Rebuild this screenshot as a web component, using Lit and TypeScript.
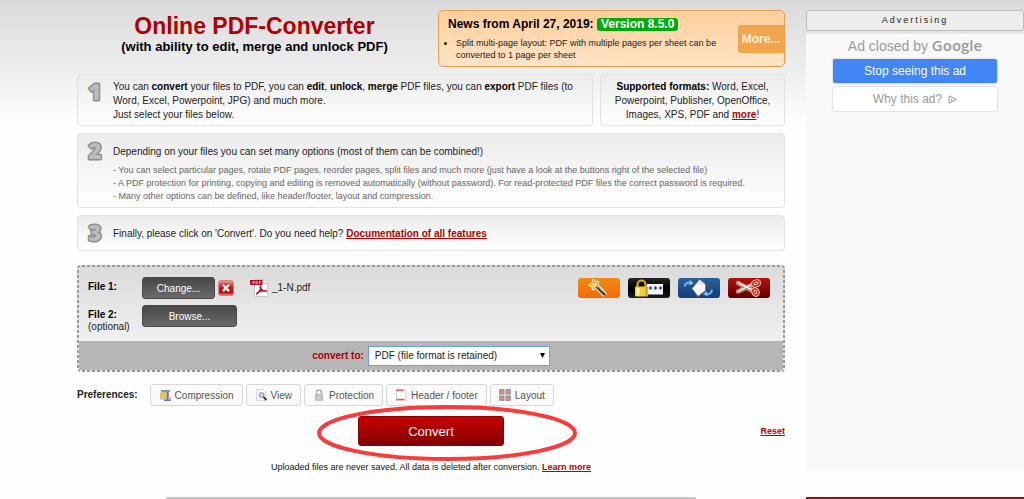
import { LitElement, html, css, svg } from "lit";
import { customElement } from "lit/decorators.js";

const icons = {
  close: html`<svg width="16" height="16" viewBox="0 0 16 16">
    <defs><linearGradient id="g" x1="0" y1="0" x2="0" y2="1"><stop offset="0" stop-color="#f5a09a" /><stop offset=".45" stop-color="#c81e1e" /><stop offset=".8" stop-color="#c00f0f" /><stop offset="1" stop-color="#e88" /></linearGradient></defs>
    <rect x=".5" y=".5" width="15" height="15" rx="2.5" fill="url(#g)" stroke="#d98080" />
    <path d="M5 4.7l6 6.4M11 4.7l-6 6.4" stroke="#8c2020" stroke-width="4" />
    <path d="M5 4.7l6 6.4M11 4.7l-6 6.4" stroke="#f2f2f2" stroke-width="2.4" />
  </svg>`,
  pdf: html`<svg width="18" height="18" viewBox="0 0 18 18">
    <path d="M4.500 .5h9l4 4v13h-13z" fill="#fff" stroke="#c9c9c9" />
    <path d="M13.500 .5v4h4" fill="#eee" stroke="#c9c9c9" />
    <path d="M10.500 7c1 2-.5 5.500-4 8M10.500 7c-.8 1.500 1 5.500 6 5M7 14c3-2 6-2.500 9-2" fill="none" stroke="#b11226" stroke-width="1.500" stroke-linecap="round" />
    <rect y="1" width="12.500" height="5" fill="#b11226" />
    <path d="M3 5V2.500h1.300v1.300H3M6 2.500V5h.8l.6-.6V3l-.6-.5zM9.300 5V2.500h1.500M9.300 3.700h1.200" fill="none" stroke="#f3c4ca" stroke-width=".7" />
  </svg>`,
  wand: html`<svg width="42" height="20" viewBox="0 0 42 20">
    <path d="M15.500 2l1.600 2.700 3-.9-.5 3.200L27.500 15.500l-2 2L17.500 9.600l-2.600 1.900-.4-3.100-3-1.100 2.600-1.700z" fill="#fff" stroke="#fff" stroke-width="2" stroke-linejoin="round" />
    <path d="M18.500 8.500l7.800 7.800" stroke="#333" stroke-width="2.600" stroke-linecap="round" />
    <path d="M19 8.300l6 6" stroke="#999" stroke-width=".9" />
    <path d="M15.500 2.300l1.400 2.800 2.800-.9-.6 2.900 2 2-3-.3-2.600 2-.5-2.900-2.800-1.100 2.500-1.500z" fill="#fbe04a" stroke="#ee7d3e" stroke-width=".8" />
  </svg>`,
  lock: html`<svg width="42" height="20" viewBox="0 0 42 20">
    <rect x="19" y="6" width="16" height="10.500" fill="#f7f7fb" />
    <path d="M22.500 8v4M20.800 9l3.400 2M24.200 9l-3.400 2M27.500 8v4M25.800 9l3.400 2M29.200 9l-3.400 2M32.500 8v4M30.800 9l3.400 2M34.200 9l-3.400 2" stroke="#3b49a0" stroke-width=".9" />
    <path d="M9.500 9V6.500a4 4 0 018 0V9" fill="none" stroke="#d5ad20" stroke-width="2.200" />
    <rect x="7" y="8.500" width="13" height="10" rx="1" fill="#f0cd3c" />
    <path d="M8.500 10h3v7.500h-3z" fill="#fff3a8" />
    <path d="M17.500 9h2v9h-2z" fill="#cf9f14" />
  </svg>`,
  rotate: html`<svg width="42" height="20" viewBox="0 0 42 20">
    <path d="M7 8.500c-.5-3 3-5 6-3.500" fill="none" stroke="#69b4e8" stroke-width="2" />
    <path d="M12 1.800l3.500 4-4.800 1.500z" fill="#7fc4f2" />
    <path d="M33.500 11.500c1 3-2.500 5.500-5.500 4.500" fill="none" stroke="#69b4e8" stroke-width="2" />
    <path d="M29 13l-4 3 4.500 2.500z" fill="#7fc4f2" />
    <path d="M21.500 1.500l6 5v6l-7.500 6-6-8z" fill="#fafafa" stroke="#777" />
    <path d="M21.500 1.500l.5 4.500 5.500.5" fill="#ddd" />
  </svg>`,
  scissors: html`<svg width="42" height="20" viewBox="0 0 42 20">
    <g fill="none" stroke-linecap="round">
      <path d="M10 5l15 8M10 13.500l15-7" stroke="#eac7c4" stroke-width="4.500" opacity=".7" />
      <ellipse cx="28" cy="5.500" rx="3.500" ry="2.300" stroke="#f2d0cc" stroke-width="3.600" transform="rotate(-20 28 5.500)" />
      <ellipse cx="27.500" cy="14" rx="2.300" ry="3.200" stroke="#f2d0cc" stroke-width="3.600" transform="rotate(-25 27.500 14)" />
      <path d="M10 5l14 7M10 13.500l14-7" stroke="#888" stroke-width="2.400" />
      <path d="M10.500 5l13 6.500M10.500 13.200l13-6.500" stroke="#eee" stroke-width="1.400" />
      <ellipse cx="28" cy="5.500" rx="3.500" ry="2.300" stroke="#cf3932" stroke-width="1.800" transform="rotate(-20 28 5.500)" />
      <ellipse cx="27.500" cy="14" rx="2.300" ry="3.200" stroke="#cf3932" stroke-width="1.800" transform="rotate(-25 27.500 14)" />
    </g>
  </svg>`,
  compression: svg`<path d="M1.500 1h10l-1 2h-8z" fill="#8597ad"/><path d="M3 3h7v5H3z" fill="#93a3b8"/><path d="M1 3.500h7v4.500H1z" fill="#efc44e"/><path d="M1 8h11v2.500H1z" fill="#b8c2d0"/><path d="M8.500 3v8" stroke="#687c96" stroke-width="1.500"/><path d="M5 10.500h7V12H5z" fill="#5f7da6"/>`,
  view: svg`<path d="M1.500.5h7l2 2v9h-9z" fill="#fafafa" stroke="#d5d8de"/><circle cx="6.500" cy="6" r="2.500" fill="#b9d5f3" stroke="#7f9cc0"/><path d="M8.500 8l3 3.200" stroke="#222" stroke-width="1.800"/>`,
  protection: svg`<path d="M3.500 6V3.500a2.500 2.500 0 015 0V6" fill="none" stroke="#b5b5b5" stroke-width="1.600"/><rect x="2" y="5" width="8" height="7" rx="1" fill="#b4b4b4"/><path d="M3 7h6M3 9h6M3 11h6" stroke="#e4e4e4" stroke-width=".8"/>`,
  header: svg`<path d="M1.500.5h8l1.500 1.500v10h-9.500z" fill="#fff" stroke="#c9c9c9"/><path d="M1.500 1.500h7M1.500 10.500h8" stroke="#dc5f5f" stroke-width="1.500"/>`,
  layout: svg`<g fill="#d98c8c" stroke="#8b8b8b"><rect x=".7" y=".7" width="4.300" height="4.300"/><rect x="7" y=".7" width="4.300" height="4.300"/><rect x=".7" y="7" width="4.300" height="4.300"/><rect x="7" y="7" width="4.300" height="4.300"/></g>`,
};

const preferences = [
  { label: "Compression", icon: icons.compression },
  { label: "View", icon: icons.view },
  { label: "Protection", icon: icons.protection },
  { label: "Header / footer", icon: icons.header },
  { label: "Layout", icon: icons.layout },
];

const tools = [
  { name: "wand", label: "Optimize", icon: icons.wand },
  { name: "lock", label: "Password", icon: icons.lock },
  { name: "rotate", label: "Rotate pages", icon: icons.rotate },
  { name: "scissors", label: "Split file", icon: icons.scissors },
];

const stepNumber = (n: number) => html`<svg class="number" width="18" height="34" viewBox="0 0 18 34">
  <text class="outline" x="9" y="25" text-anchor="middle">${n}</text>
</svg>`;

@customElement("app-root")
export class AppRoot extends LitElement {
  static styles = css`
    :host { display: block; font: 10px/14px "Liberation Sans", Arial, sans-serif; color: #222; }
    * { box-sizing: border-box; }
    svg { display: block; flex: none; }
    p, h1, h2, ul { margin: 0; }
    b { color: #000; }
    a { color: #b00000; font-weight: bold; }
    button, select { font-family: inherit; margin: 0; }
    .page { display: flex; gap: 21px; height: 100vh; overflow: hidden; padding: 10px 0 0 77px; background: linear-gradient(#dadada, #fefefe 125px); }
    main { flex: 1; min-width: 0; }
    aside { flex: 0 0 218px; display: flex; flex-direction: column; }
    .top { display: flex; justify-content: space-between; }
    .heading { flex: 1; text-align: center; padding: 3px 6px 0 0; }
    h1 { font-size: 23px; line-height: 27px; color: #b00000; }
    .subtitle { font-size: 13px; line-height: 14px; font-weight: bold; color: #000; }
    .news { display: flex; align-items: center; width: 347px; height: 57px; border: 1px solid #e9a04c; border-radius: 5px; background: linear-gradient(#ffcf9c, #ffe3c6); }
    .news-body { flex: 1; padding-left: 9px; }
    h2 { font-size: 12px; line-height: 15px; color: #000; }
    .version { display: inline-block; line-height: 13px; padding: 0 4px; border-radius: 3px; background: #00aa0a; color: #fff; }
    ul { padding: 0 0 0 8px; margin-top: 5px; font-size: 9px; line-height: 12px; }
    .news-more { width: 46px; height: 28px; padding: 0; border: 0; border-radius: 3px 0 0 3px; background: #f2a54c; color: #fdeedd; font-size: 12px; font-weight: bold; }
    .box { display: flex; align-items: flex-start; border: 1px solid #e2e2e2; border-radius: 4px; background: linear-gradient(#ececec, #fdfdfd 90%); }
    .step { gap: 9px; padding: 4px 9px 0 8px; margin-top: 7px; }
    .number { margin-top: -4px; font: 800 22px "Open Sans", sans-serif; }
    .outline { fill: #bcbcbc; stroke: #8f8f8f; stroke-width: 3px; stroke-linejoin: round; paint-order: stroke; }
    .row { display: flex; gap: 7px; margin-top: 7px; }
    .row .box { margin-top: 0; height: 52px; }
    .row .step { flex: 1; }
    .row p { padding-top: 1px; }
    .formats { flex: 0 0 185px; justify-content: center; text-align: center; padding: 4px; }
    .options { height: 75px; }
    .lead { line-height: 28px; }
    .step.finish { height: 36px; }
    .details { margin-top: -2px; color: #666; font-size: 9px; line-height: 13px; }
    .files {
      margin-top: 14px; padding: 2px; border-radius: 4px;
      background:
        repeating-linear-gradient(90deg, #999 0 3px, transparent 3px 5px) top / 100% 2px no-repeat,
        repeating-linear-gradient(90deg, #999 0 3px, transparent 3px 5px) bottom / 100% 2px no-repeat,
        repeating-linear-gradient(#999 0 3px, transparent 3px 5px) left / 2px 100% no-repeat,
        repeating-linear-gradient(#999 0 3px, transparent 3px 5px) right / 2px 100% no-repeat,
        linear-gradient(#dadada, #f0f0f0 75px);
    }
    .file-rows { height: 74px; padding: 10px 13px 0 9px; display: flex; flex-direction: column; gap: 6px; }
    .file { display: flex; align-items: flex-start; }
    .file-label { width: 54px; padding-top: 4px; line-height: 12px; }
    .file-label b { display: block; }
    .upload { height: 22px; padding: 0; border: 1px solid #4a4a4a; border-radius: 3px; background: linear-gradient(#484848, #6a6a6a); color: #fff; font-size: 10px; }
    .change { width: 73px; }
    .browse { width: 95px; }
    .remove { width: 16px; height: 16px; margin: 3px 0 0 3px; padding: 0; border: 0; background: none; }
    .filename { display: flex; align-items: center; gap: 4px; height: 22px; margin-left: 16px; }
    .tools { display: flex; gap: 8px; margin-left: auto; padding-top: 1px; }
    .tool { width: 42px; height: 20px; padding: 0; border: 0; border-radius: 3px; overflow: hidden; }
    .wand { background: linear-gradient(#ee8b13, #f56c05); }
    .lock { background: linear-gradient(#262626, #000 50%, #1d1d1d); }
    .rotate { background: linear-gradient(#275f9e, #163e78); }
    .scissors { background: linear-gradient(#b51205, #5b0000); }
    .target { display: flex; align-items: center; justify-content: center; gap: 4px; height: 29px; background: #b6b6b6; }
    .target label { color: #b00000; font-weight: bold; }
    .select { display: grid; align-items: center; justify-items: end; }
    select { grid-area: 1 / 1; appearance: none; width: 182px; height: 20px; padding: 0 6px; border: 1px solid #6d9df0; border-radius: 0; background: #fff; color: #222; font-size: 10px; }
    .arrow { grid-area: 1 / 1; margin-right: 5px; pointer-events: none; }
    .prefs { display: flex; align-items: center; gap: 3px; margin-top: 12px; }
    .prefs b { margin-right: 9px; color: #222; }
    .pref { display: flex; align-items: center; gap: 4px; height: 22px; padding: 0 8px; border: 1px solid #d6d6d6; border-radius: 3px; background: #fafafa; color: #555; font-size: 10px; white-space: nowrap; }
    .action { display: grid; grid-template-columns: 1fr auto 1fr; align-items: center; margin-top: 10px; }
    .convert-wrap { grid-column: 2; position: relative; }
    .convert { display: block; width: 146px; height: 30px; border: 1px solid #8c0000; border-radius: 3px; background: linear-gradient(#c80000, #830000); color: #fff; font-size: 13px; }
    .marker { position: absolute; left: -42px; top: -12px; pointer-events: none; }
    .reset { justify-self: end; font-size: 9px; line-height: 11px; }
    .note { margin-top: 15px; text-align: center; font-size: 9px; line-height: 12px; color: #111; }
    .rule { margin: 24px 89px 0 89px; height: 2px; border-radius: 1px 1px 0 0; background: #c8c8c8; }
    .ad-title { height: 21px; border: 1px solid #bcbcbc; border-radius: 3px; background: #ededed; text-align: center; font-size: 9px; line-height: 19px; letter-spacing: 2px; }
    .ad { height: 437px; margin-top: 3px; padding: 2px 27px; background: #f9f9f9; text-align: center; color: #999; }
    .ad-line { font-size: 14px; line-height: 19px; margin-bottom: 3px; }
    .google { font-family: "Open Sans", sans-serif; font-size: 15px; font-weight: 600; }
    .ad-button { display: flex; align-items: center; justify-content: center; gap: 6px; width: 100%; height: 24px; margin-bottom: 4px; padding: 0; border: 0; border-radius: 2px; font-size: 12px; box-shadow: 0 0 2px #aaa; }
    .stop { background: #4285f4; color: #fff; }
    .why { background: #fff; color: #999; }
    .ad-foot { margin-top: 26px; height: 2px; background: #b00000; }
  `;

  render() {
    return html`<div class="page">
      <main>
        <div class="top">
          <div class="heading">
            <h1>Online PDF-Converter</h1>
            <p class="subtitle">(with ability to edit, merge and unlock PDF)</p>
          </div>
          <section class="news">
            <div class="news-body">
              <h2>News from April 27, 2019: <span class="version">Version 8.5.0</span></h2>
              <ul><li>Split multi-page layout: PDF with multiple pages per sheet can be converted to 1 page per sheet</li></ul>
            </div>
            <button class="news-more">More...</button>
          </section>
        </div>
        <div class="row">
          <section class="box step">
            ${stepNumber(1)}
            <p>You can <b>convert</b> your files to PDF, you can <b>edit</b>, <b>unlock</b>, <b>merge</b> PDF files, you can <b>export</b> PDF files (to Word, Excel, Powerpoint, JPG) and much more.<br />Just select your files below.</p>
          </section>
          <section class="box formats">
            <p><b>Supported formats:</b> Word, Excel, Powerpoint, Publisher, OpenOffice, Images, XPS, PDF and <a href="#">more</a>!</p>
          </section>
        </div>
        <section class="box step options">
          ${stepNumber(2)}
          <div>
            <p class="lead">Depending on your files you can set many options (most of them can be combined!)</p>
            <p class="details">- You can select particular pages, rotate PDF pages, reorder pages, split files and much more (just have a look at the buttons right of the selected file)<br />- A PDF protection for printing, copying and editing is removed automatically (without password). For read-protected PDF files the correct password is required.<br />- Many other options can be defined, like header/footer, layout and compression.</p>
          </div>
        </section>
        <section class="box step finish">
          ${stepNumber(3)}
          <p class="lead">Finally, please click on 'Convert'. Do you need help? <a href="#">Documentation of all features</a></p>
        </section>
        <section class="files">
          <div class="file-rows">
            <div class="file">
              <span class="file-label"><b>File 1:</b></span>
              <button class="upload change">Change...</button>
              <button class="remove" aria-label="Remove file">${icons.close}</button>
              <span class="filename">${icons.pdf}_1-N.pdf</span>
              <div class="tools">${tools.map((t) => html`<button class="tool ${t.name}" aria-label=${t.label}>${t.icon}</button>`)}</div>
            </div>
            <div class="file">
              <span class="file-label"><b>File 2:</b>(optional)</span>
              <button class="upload browse">Browse...</button>
            </div>
          </div>
          <div class="target">
            <label for="format">convert to:</label>
            <div class="select">
              <select id="format"><option>PDF (file format is retained)</option></select>
              <svg class="arrow" width="5" height="5" viewBox="0 0 5 5"><path d="M0 0h5L2.500 5z" fill="#000" /></svg>
            </div>
          </div>
        </section>
        <div class="prefs">
          <b>Preferences:</b>
          ${preferences.map((p) => html`<button class="pref"><svg width="12" height="12" viewBox="0 0 12 12">${p.icon}</svg>${p.label}</button>`)}
        </div>
        <div class="action">
          <div class="convert-wrap">
            <button class="convert">Convert</button>
            <svg class="marker" width="262" height="58" viewBox="0 0 262 58"><ellipse cx="131" cy="29" rx="128" ry="26" fill="none" stroke="#fb3b3b" stroke-width="4" /></svg>
          </div>
          <a class="reset" href="#">Reset</a>
        </div>
        <p class="note">Uploaded files are never saved. All data is deleted after conversion. <a href="#">Learn more</a></p>
        <div class="rule"></div>
      </main>
      <aside>
        <div class="ad-title">Advertising</div>
        <div class="ad">
          <p class="ad-line">Ad closed by <span class="google">Google</span></p>
          <button class="ad-button stop">Stop seeing this ad</button>
          <button class="ad-button why">Why this ad? <svg width="9" height="9" viewBox="0 0 9 9"><path d="M3.500 7.500l-2.500.5V.8L8.300 4.500 3.800 7V3.500" fill="none" stroke="#999" /></svg></button>
        </div>
        <div class="ad-foot"></div>
      </aside>
    </div>`;
  }
}
